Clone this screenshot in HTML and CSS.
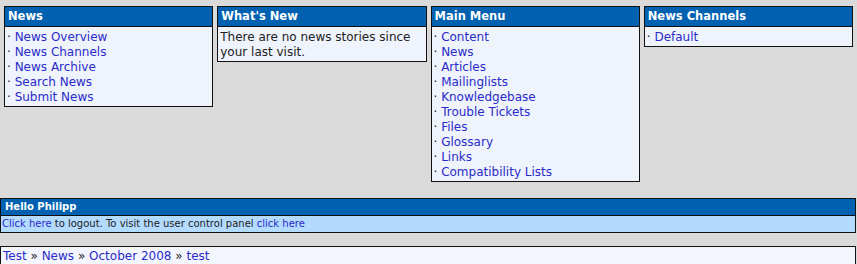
FILE: index.html
```html
<!DOCTYPE html>
<html lang="en">
<head>
    <meta charset="UTF-8">
    <title>News</title>
    <link rel="stylesheet" href="styles.css">
</head>
<body>
    <div class="blocks">
        <div class="block">
            <div class="block-title">News</div>
            <div class="block-body">
                <div>&middot; <a href="#">News Overview</a></div>
                <div>&middot; <a href="#">News Channels</a></div>
                <div>&middot; <a href="#">News Archive</a></div>
                <div>&middot; <a href="#">Search News</a></div>
                <div>&middot; <a href="#">Submit News</a></div>
            </div>
        </div>
        <div class="block">
            <div class="block-title">What's New</div>
            <div class="block-body">There are no news stories since your last visit.</div>
        </div>
        <div class="block">
            <div class="block-title">Main Menu</div>
            <div class="block-body">
                <div>&middot; <a href="#">Content</a></div>
                <div>&middot; <a href="#">News</a></div>
                <div>&middot; <a href="#">Articles</a></div>
                <div>&middot; <a href="#">Mailinglists</a></div>
                <div>&middot; <a href="#">Knowledgebase</a></div>
                <div>&middot; <a href="#">Trouble Tickets</a></div>
                <div>&middot; <a href="#">Files</a></div>
                <div>&middot; <a href="#">Glossary</a></div>
                <div>&middot; <a href="#">Links</a></div>
                <div>&middot; <a href="#">Compatibility Lists</a></div>
            </div>
        </div>
        <div class="block">
            <div class="block-title">News Channels</div>
            <div class="block-body">
                <div>&middot; <a href="#">Default</a></div>
            </div>
        </div>
    </div>

    <div class="userbar">
        <div class="userbar-title">Hello Philipp</div>
        <div class="userbar-body"><a href="#">Click here</a> to logout. To visit the user control panel <a href="#">click here</a></div>
    </div>

    <div class="crumbs">
        <a href="#">Test</a> &raquo; <a href="#">News</a> &raquo; <a href="#">October 2008</a> &raquo; <a href="#">test</a>
    </div>
</body>
</html>
```

FILE: styles.css
```css
body {
    margin: 0;
    background-color: #dadada;
    font-family: "DejaVu Sans", Verdana, sans-serif;
    font-size: 12px;
    color: #222;
}
a {
    color: #2b2bc8;
    text-decoration: none;
}
.blocks {
    display: grid;
    grid-template-columns: repeat(4, 1fr);
    gap: 4px;
    align-items: start;
    padding: 6px 4px 0 4px;
}
.block {
    border: 1px solid #111;
    background: #eef3fc;
}
.block-title {
    background: #0061b1;
    color: #fff;
    font-weight: bold;
    font-size: 11.5px;
    line-height: 19px;
    padding: 0 3px;
    border-bottom: 1px solid #111;
}
.block-body {
    line-height: 15px;
    padding: 3px 2px 1px 2px;
}
.userbar {
    margin-top: 16px;
    border: 1px solid #111;
    margin-right: 1px;
    font-size: 10px;
}
.userbar-title {
    background: #0061b1;
    color: #fff;
    font-weight: bold;
    line-height: 16px;
    padding: 0 4px;
    border-bottom: 1px solid #111;
}
.userbar-body {
    background: #b3dbff;
    line-height: 16px;
    padding: 0 1px;
}
.crumbs {
    margin-top: 13px;
    margin-right: 1px;
    border: 1px solid #111;
    border-bottom: none;
    background: #f3f6fe;
    line-height: 17px;
    padding: 1px 2px;
    font-size: 12px;
}
```
